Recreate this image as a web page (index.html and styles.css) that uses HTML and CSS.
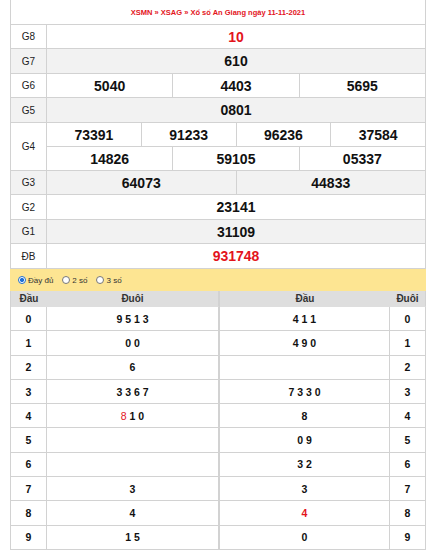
FILE: index.html
```html
<!DOCTYPE html>
<html lang="vi">
<head>
<meta charset="utf-8">
<link rel="stylesheet" href="styles.css">
</head>
<body>
<div class="wrap">
  <div class="results">
    <div class="cell title">XSMN » XSAG » Xổ số An Giang ngày 11-11-2021</div>

    <div class="cell label">G8</div>
    <div class="cell num red span12">10</div>

    <div class="cell label alt">G7</div>
    <div class="cell num alt span12">610</div>

    <div class="cell label">G6</div>
    <div class="cell num span4">5040</div>
    <div class="cell num span4">4403</div>
    <div class="cell num span4">5695</div>

    <div class="cell label alt">G5</div>
    <div class="cell num alt span12">0801</div>

    <div class="cell label rows2">G4</div>
    <div class="cell num span3">73391</div>
    <div class="cell num span3">91233</div>
    <div class="cell num span3">96236</div>
    <div class="cell num span3">37584</div>
    <div class="cell num span4">14826</div>
    <div class="cell num span4">59105</div>
    <div class="cell num span4">05337</div>

    <div class="cell label alt">G3</div>
    <div class="cell num alt span6">64073</div>
    <div class="cell num alt span6">44833</div>

    <div class="cell label">G2</div>
    <div class="cell num span12">23141</div>

    <div class="cell label alt">G1</div>
    <div class="cell num alt span12">31109</div>

    <div class="cell label">ĐB</div>
    <div class="cell num red span12">931748</div>
  </div>

  <div class="options">
    <label class="opt"><span class="radio checked"></span>Đầy đủ</label>
    <label class="opt"><span class="radio"></span>2 số</label>
    <label class="opt"><span class="radio"></span>3 số</label>
  </div>

  <div class="loto">
    <div class="lgrid left">
      <div class="hd">Đầu</div><div class="hd last">Đuôi</div>
      <div class="lc key">0</div><div class="lc">9 5 1 3</div>
      <div class="lc key">1</div><div class="lc">0 0</div>
      <div class="lc key">2</div><div class="lc">6</div>
      <div class="lc key">3</div><div class="lc">3 3 6 7</div>
      <div class="lc key">4</div><div class="lc"><span class="hl thin">8</span> 1 0</div>
      <div class="lc key">5</div><div class="lc"></div>
      <div class="lc key">6</div><div class="lc"></div>
      <div class="lc key">7</div><div class="lc">3</div>
      <div class="lc key">8</div><div class="lc">4</div>
      <div class="lc key">9</div><div class="lc">1 5</div>
    </div>
    <div class="lgrid right">
      <div class="hd">Đầu</div><div class="hd last">Đuôi</div>
      <div class="lc">4 1 1</div><div class="lc key">0</div>
      <div class="lc">4 9 0</div><div class="lc key">1</div>
      <div class="lc"></div><div class="lc key">2</div>
      <div class="lc">7 3 3 0</div><div class="lc key">3</div>
      <div class="lc">8</div><div class="lc key">4</div>
      <div class="lc">0 9</div><div class="lc key">5</div>
      <div class="lc">3 2</div><div class="lc key">6</div>
      <div class="lc">3</div><div class="lc key">7</div>
      <div class="lc"><span class="hl">4</span></div><div class="lc key">8</div>
      <div class="lc">0</div><div class="lc key">9</div>
    </div>
  </div>
</div>
</body>
</html>
```

FILE: styles.css
```css
* { box-sizing: border-box; }
html, body { margin: 0; padding: 0; background: #fff; }
body {
  font-family: "Liberation Sans", Arial, sans-serif;
  color: #111;
}
.wrap {
  margin-left: 10px;
  width: 416px;
}
.results {
  display: grid;
  grid-template-columns: 36px repeat(12, 1fr);
  grid-template-rows: 25px 24px 25px 24px 25px 24px 24px 24px 25px 24px 25px;
  border-left: 1px solid #d2d2d2;
}
.cell {
  border-right: 1px solid #d2d2d2;
  border-bottom: 1px solid #d2d2d2;
  display: flex;
  align-items: center;
  justify-content: center;
  background: #fff;
}
.title {
  grid-column: 1 / -1;
  color: #e3141c;
  font-weight: bold;
  font-size: 7.5px;
}
.label {
  font-size: 10px;
  color: #222;
}
.rows2 { grid-row: span 2; }
.alt { background: #f2f2f2; }
.num {
  font-size: 14px;
  font-weight: bold;
  color: #111;
}
.red { color: #e3141c; }
.span12 { grid-column: span 12; }
.span6 { grid-column: span 6; }
.span4 { grid-column: span 4; }
.span3 { grid-column: span 3; }

.options {
  height: 22px;
  background: #fde592;
  display: flex;
  align-items: center;
  padding-left: 8px;
  gap: 9px;
}
.opt {
  display: flex;
  align-items: center;
  gap: 2px;
  font-size: 8px;
  color: #333;
}
.radio {
  width: 8px;
  height: 8px;
  border-radius: 50%;
  border: 1px solid #777;
  background: #fff;
  display: inline-block;
}
.radio.checked {
  border-color: #1f6fd6;
  background: radial-gradient(circle, #1f6fd6 0 2px, #fff 2.2px);
}

.loto {
  display: flex;
}
.lgrid {
  display: grid;
  grid-auto-rows: 24.3px;
  border-left: 1px solid #d2d2d2;
}
.lgrid.left {
  width: 209px;
  grid-template-columns: 36px 1fr;
}
.lgrid.right {
  width: 207px;
  grid-template-columns: 1fr 36px;
}
.lgrid .hd {
  height: 16px;
  background: #dedede;
  font-size: 10px;
  font-weight: bold;
  color: #333;
  display: flex;
  align-items: center;
  justify-content: center;
  border-bottom: 1px solid #dedede;
}
.lgrid .hd.last { border-right: 1px solid #d2d2d2; }
.lgrid .lc {
  border-right: 1px solid #d2d2d2;
  border-bottom: 1px solid #d2d2d2;
  display: flex;
  align-items: center;
  justify-content: center;
  font-size: 10.5px;
  font-weight: bold;
  color: #111;
  white-space: pre;
}
.lgrid { grid-template-rows: 16px; }
.hl { color: #e3141c; }
.hl.thin { font-weight: normal; }
```
